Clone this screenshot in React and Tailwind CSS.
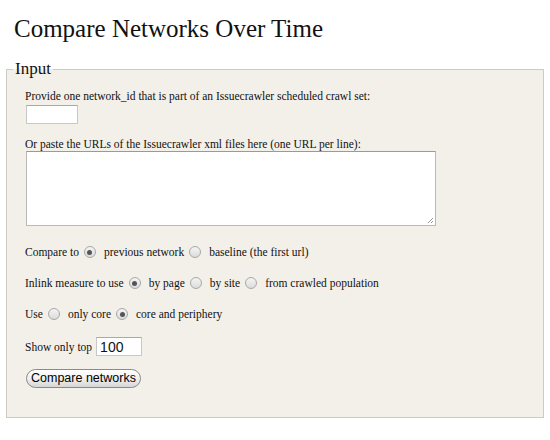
import React from "react";

function Radio({ checked }) {
    return (
        <span className="inline-flex items-center justify-center w-[12px] h-[12px] rounded-full border border-[#a8a8a8] bg-gradient-to-b from-[#f4f4f4] to-[#dcdcdc] ml-[5px] mr-[8px] align-middle">
            {checked && <span className="w-[5px] h-[5px] rounded-full bg-[#555]"></span>}
        </span>
    );
}

function RadioRow({ label, options }) {
    return (
        <div className="flex items-center h-[16px]">
            <span>{label}</span>
            {options.map((opt, i) => (
                <span key={i} className="flex items-center">
                    <Radio checked={opt.checked} />
                    <span>{opt.text}</span>
                </span>
            ))}
        </div>
    );
}

export default function App() {
    return (
        <div className="w-[550px] h-[440px] bg-white text-[#111] font-['Liberation_Serif',serif] overflow-hidden">
            <h1 className="pl-[14px] pt-[14px] text-[25px] leading-[30px] font-normal">
                Compare Networks Over Time
            </h1>

            <fieldset className="mx-[6px] mt-[15px] w-[538px] h-[359px] border border-[#cfcbc4] bg-[#f3f0e9] pl-[18px] pt-[6px]">
                <legend className="-ml-[12px] px-[2px] text-[17px] leading-[20px]">Input</legend>

                <div className="text-[11.5px] leading-[14px]">
                    <p className="mt-[4px]">
                        Provide one network_id that is part of an Issuecrawler scheduled crawl set:
                    </p>
                    <div className="mt-[2px] ml-[1px] w-[52px] h-[19px] bg-white border border-[#c8c8c8] border-t-[#a9a9a9]"></div>

                    <p className="mt-[13px]">
                        Or paste the URLs of the Issuecrawler xml files here (one URL per line):
                    </p>
                    <div className="relative mt-[0px] ml-[1px] w-[410px] h-[75px] bg-white border border-[#b9b9b9] border-t-[#9a9a9a]">
                        <svg className="absolute right-[1px] bottom-[1px]" width="8" height="8" viewBox="0 0 8 8">
                            <path d="M7 2 L2 7 M7 5 L5 7" stroke="#999" strokeWidth="1" />
                        </svg>
                    </div>

                    <div className="mt-[18px] flex flex-col gap-[15px]">
                        <RadioRow
                            label="Compare to"
                            options={[
                                { text: "previous network", checked: true },
                                { text: "baseline (the first url)", checked: false },
                            ]}
                        />
                        <RadioRow
                            label="Inlink measure to use"
                            options={[
                                { text: "by page", checked: true },
                                { text: "by site", checked: false },
                                { text: "from crawled population", checked: false },
                            ]}
                        />
                        <RadioRow
                            label="Use"
                            options={[
                                { text: "only core", checked: false },
                                { text: "core and periphery", checked: true },
                            ]}
                        />
                    </div>

                    <div className="mt-[15px] flex items-center">
                        <span>Show only top</span>
                        <div className="ml-[4px] w-[46px] h-[19px] bg-white border border-[#c8c8c8] border-t-[#a9a9a9] flex items-center pl-[3px] font-['Liberation_Sans',sans-serif] text-[14px]">
                            100
                        </div>
                    </div>

                    <button
                        type="button"
                        className="mt-[13px] ml-[1px] h-[19px] px-[4px] rounded-full border border-[#8a8a8a] bg-gradient-to-b from-[#ffffff] via-[#f0f0f0] to-[#d6d6d6] font-['Liberation_Sans',sans-serif] text-[12.5px] leading-[17px] text-black"
                    >
                        Compare networks
                    </button>
                </div>
            </fieldset>
        </div>
    );
}
